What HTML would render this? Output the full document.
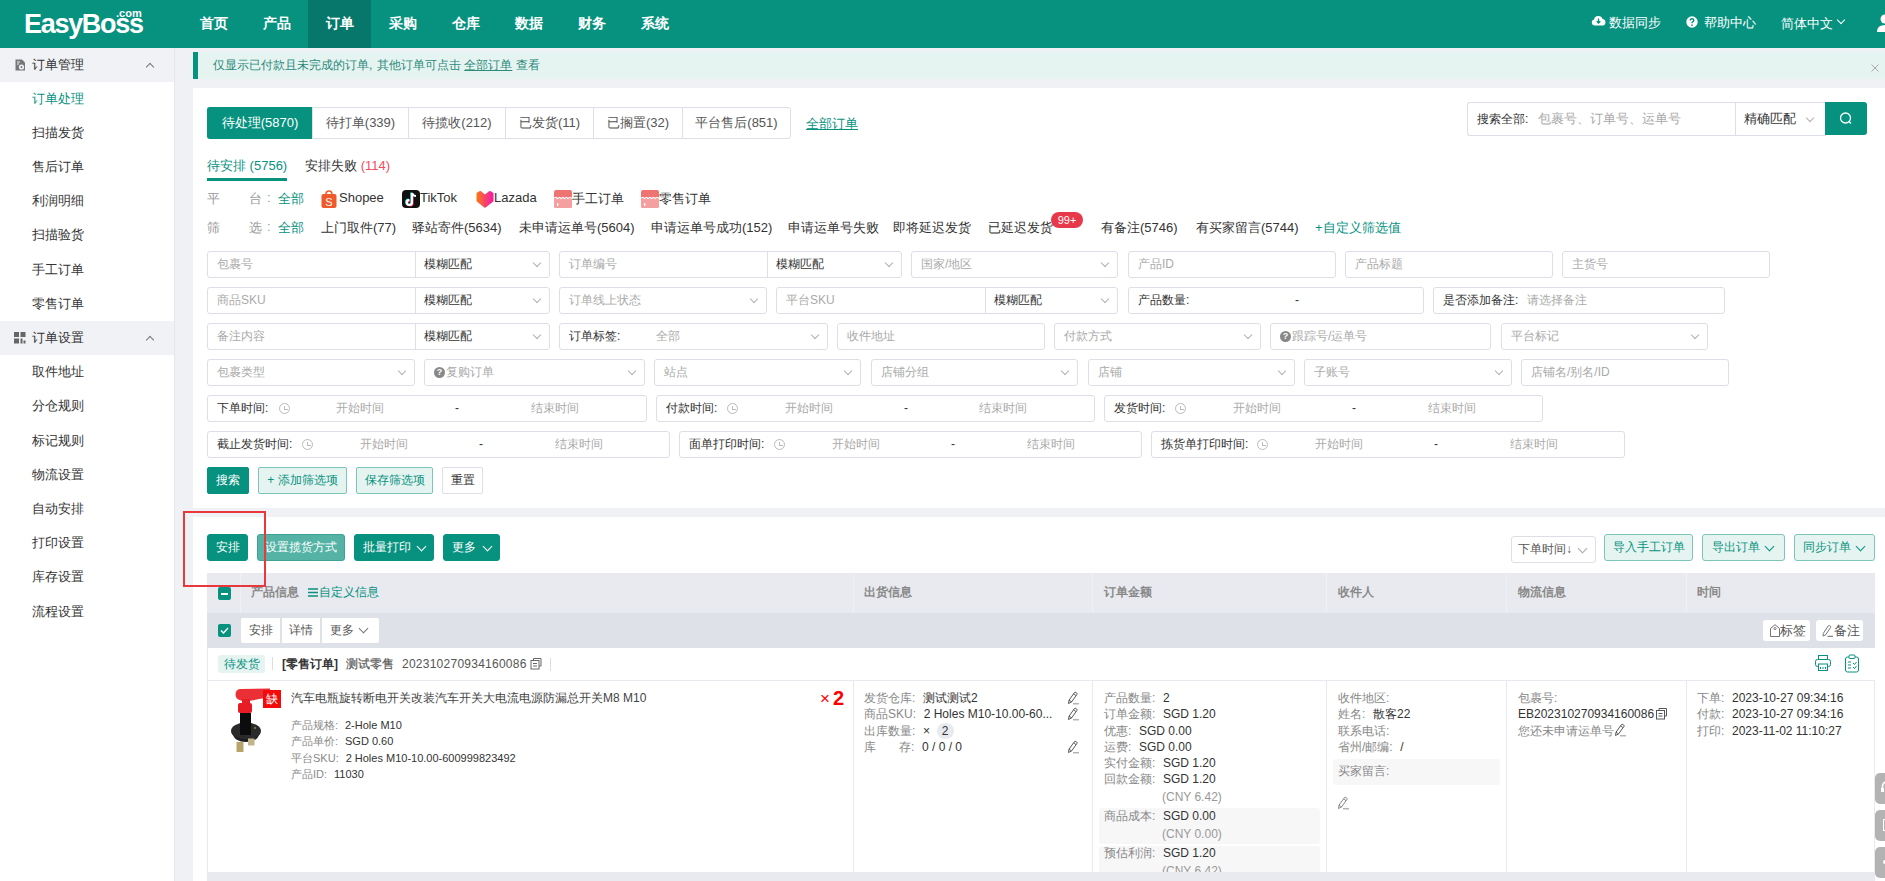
<!DOCTYPE html>
<html><head><meta charset="utf-8">
<style>
*{box-sizing:border-box;margin:0;padding:0}
html,body{width:1885px;height:881px;overflow:hidden}
body{font-family:"Liberation Sans",sans-serif;font-size:13px;color:#333;background:#f0f1f5;position:relative}
.abs{position:absolute}
.hdr{left:0;top:0;width:1885px;height:48px;background:#07927f}
.logo{left:24px;top:7px;color:#fff;font-size:27px;line-height:34px;font-weight:bold;letter-spacing:-1.3px;white-space:nowrap}
.logo small{position:absolute;left:92px;top:-4px;font-size:11px;line-height:20px;font-weight:bold;letter-spacing:0}
.nav{left:182px;top:0;height:48px;display:flex}
.nav div{width:63px;height:48px;line-height:46px;text-align:center;color:#fff;font-size:14px;font-weight:bold}
.nav div.on{background:#06776a}
.side{left:0;top:48px;width:175px;height:833px;background:#fff;border-right:1px solid #e4e6eb}
.side .g{position:absolute;left:0;width:174px;height:34px;background:#f1f2f6;line-height:34px;padding-left:32px;font-size:13px;color:#333}
.side .i{position:absolute;left:32px;font-size:13px;color:#333;line-height:20px;margin-top:1px}
.notice{left:193px;top:52px;width:1692px;height:27px;background:#e6f4f1;border-left:5px solid #07927f;color:#2c8a7b;font-size:12px;line-height:26px;padding-left:15px}
.card{left:193px;background:#fff;width:1692px}
.tabs{left:207px;top:107px;height:32px;display:flex}
.tabs div{height:32px;line-height:30px;text-align:center;color:#555;font-size:13px;border:1px solid #dcdfe6;border-right:0}
.tabs div:last-child{border-right:1px solid #dcdfe6;border-radius:0 3px 3px 0}
.tabs div.on{background:#07927f;color:#fff;border-color:#07927f;border-radius:3px 0 0 3px}
.teal{color:#07927f}
.inp{position:absolute;height:27px;border:1px solid #dcdfe6;border-radius:3px;background:#fff;font-size:12px;color:#aaa;line-height:25px;padding-left:9px;white-space:nowrap}
.chev{position:absolute;width:7px;height:7px;border-right:1px solid #aaa;border-bottom:1px solid #aaa;transform:rotate(45deg)}
.lbl{color:#333}
.btn{position:absolute;height:26px;line-height:24px;border-radius:2px;font-size:12px;text-align:center;white-space:nowrap}
.bp{background:#07927f;color:#fff;border:1px solid #07927f}
.bl{background:#e6f4f1;color:#07927f;border:1px solid #7cc6b9}
.bw{background:#fff;color:#333;border:1px solid #dcdfe6}
.gray{color:#999}
.th{position:absolute;top:0;font-size:12px;color:#888;font-weight:bold;line-height:39px}
.k{color:#888}
.q{display:inline-block;width:11px;height:11px;border-radius:50%;background:#888;color:#fff;font-size:9px;line-height:11px;text-align:center;font-weight:bold;margin-right:1px;vertical-align:1px}
.clk{position:absolute;top:7px;width:11px;height:11px;border:1px solid #bbb;border-radius:50%}
.clk:after{content:"";position:absolute;left:4px;top:2px;width:3px;height:3px;border-left:1px solid #bbb;border-bottom:1px solid #bbb}
.pf{position:absolute;top:190px;font-size:13px;color:#333;white-space:nowrap}
.fl{position:absolute;top:219px;font-size:13px;color:#333;white-space:nowrap}
.dl{font-size:12px;line-height:16.3px;color:#333;white-space:nowrap}
.cl{display:inline-block;width:11px;font-style:normal}
.pd{font-size:11px;line-height:16.4px}
.pd .cl{width:10px}
.pen{vertical-align:-2px}
</style></head><body>

<!-- header -->
<div class="abs hdr">
  <div class="abs logo">EasyBoss<small>.com</small></div>
  <div class="abs nav">
    <div>首页</div><div>产品</div><div class="on">订单</div><div>采购</div><div>仓库</div><div>数据</div><div>财务</div><div>系统</div>
  </div>
  <svg class="abs" style="left:1591px;top:15px" width="15" height="11" viewBox="0 0 15 11"><path d="M3.5 10.5 A3 3 0 0 1 3 4.6 A4.5 4.5 0 0 1 11.6 4 A3.3 3.3 0 0 1 11.8 10.5 Z" fill="#fff"/><path d="M7.5 3.5 V7.8 M5.7 6.2 L7.5 8 L9.3 6.2" fill="none" stroke="#07927f" stroke-width="1.3"/></svg>
  <div class="abs" style="left:1609px;top:14px;color:#fff;font-size:13px">数据同步</div>
  <svg class="abs" style="left:1686px;top:16px" width="12" height="12" viewBox="0 0 12 12"><circle cx="6" cy="6" r="5.7" fill="#fff"/><path d="M4.2 4.6 Q4.2 2.7 6 2.7 Q7.8 2.7 7.8 4.4 Q7.8 5.4 6.6 5.9 Q6 6.2 6 7.2" fill="none" stroke="#07927f" stroke-width="1.4"/><circle cx="6" cy="9.1" r="0.85" fill="#07927f"/></svg>
  <div class="abs" style="left:1704px;top:14px;color:#fff;font-size:13px">帮助中心</div>
  <div class="abs" style="left:1781px;top:15px;color:#fff;font-size:13px">简体中文</div>
  <span class="chev" style="left:1838px;top:17px;width:6px;height:6px;border-color:#fff"></span>
  <svg class="abs" style="left:1877px;top:14px" width="12" height="19" viewBox="0 0 12 19"><circle cx="8" cy="5" r="4.5" fill="#fff"/><path d="M0 18 Q0 11 8 11 Q12 11 12 18 Z" fill="#fff"/></svg>
</div>

<!-- sidebar -->
<div class="abs side">
  <div class="g" style="top:0">订单管理</div>
  <svg class="abs" style="left:15px;top:11px" width="11" height="12" viewBox="0 0 11 12"><path d="M0.5 0.5 H7 L10 3.5 V11.5 H0.5 Z" fill="#777"/><circle cx="6.5" cy="8" r="2.6" fill="#f1f2f6"/><circle cx="6.5" cy="8" r="1" fill="#777"/><path d="M2 3 H5 M2 5 H4" stroke="#f1f2f6" stroke-width="1"/></svg>
  <span class="chev" style="left:147px;top:16px;width:6px;height:6px;transform:rotate(225deg);border-color:#777"></span>
  <div class="i" style="top:40px;color:#07927f">订单处理</div>
  <div class="i" style="top:74px">扫描发货</div>
  <div class="i" style="top:108px">售后订单</div>
  <div class="i" style="top:142px">利润明细</div>
  <div class="i" style="top:176px">扫描验货</div>
  <div class="i" style="top:211px">手工订单</div>
  <div class="i" style="top:245px">零售订单</div>
  <div class="g" style="top:273px">订单设置</div>
  <svg class="abs" style="left:14px;top:284px" width="12" height="12" viewBox="0 0 12 12"><rect x="0" y="0" width="5" height="5" fill="#666"/><rect x="6.5" y="0" width="5" height="5" fill="#666"/><rect x="0" y="6.5" width="5" height="5" fill="#666"/><rect x="6.5" y="6.5" width="2" height="5" fill="#666"/><rect x="9.5" y="8.5" width="2" height="3" fill="#666"/></svg>
  <span class="chev" style="left:147px;top:289px;width:6px;height:6px;transform:rotate(225deg);border-color:#777"></span>
  <div class="i" style="top:313px">取件地址</div>
  <div class="i" style="top:347px">分仓规则</div>
  <div class="i" style="top:382px">标记规则</div>
  <div class="i" style="top:416px">物流设置</div>
  <div class="i" style="top:450px">自动安排</div>
  <div class="i" style="top:484px">打印设置</div>
  <div class="i" style="top:518px">库存设置</div>
  <div class="i" style="top:553px">流程设置</div>
</div>

<!-- notice -->
<div class="abs notice">仅显示已付款且未完成的订单<span style="display:inline-block;width:8px">,</span>其他订单可点击 <u>全部订单</u> 查看<svg class="abs" style="left:1673px;top:12px" width="8" height="8" viewBox="0 0 8 8"><path d="M0.5 0.5 L7.5 7.5 M7.5 0.5 L0.5 7.5" stroke="#aaa" stroke-width="1"/></svg></div>

<!-- card 1 -->
<div class="abs card" style="top:88px;height:420px"></div>
<div class="abs tabs">
  <div class="on" style="width:105px">待处理(5870)</div><div style="width:96px">待打单(339)</div><div style="width:97px">待揽收(212)</div><div style="width:88px">已发货(11)</div><div style="width:89px">已搁置(32)</div><div style="width:109px">平台售后(851)</div>
</div>
<div class="abs teal" style="left:806px;top:115px;font-size:13px;text-decoration:underline">全部订单</div>

<div class="abs" style="left:207px;top:157px;font-size:13px;color:#07927f">待安排 (5756)</div>
<div class="abs" style="left:207px;top:178px;width:80px;height:3px;background:#07927f"></div>
<div class="abs" style="left:305px;top:157px;font-size:13px;color:#333">安排失败 <span style="color:#f04d5d">(114)</span></div>

<div class="pf" style="left:207px;color:#999">平</div><div class="pf" style="left:249px;color:#999">台</div><div class="pf" style="left:267px;color:#999">:</div><div class="pf" style="left:278px;color:#07927f">全部</div>
<div class="fl" style="left:207px;color:#999">筛</div><div class="fl" style="left:249px;color:#999">选</div><div class="fl" style="left:267px;color:#999">:</div><div class="fl" style="left:278px;color:#07927f">全部</div>


<!-- platform -->
<div class="abs" style="left:321px;top:190px;width:16px;height:18px">
 <svg width="16" height="18" viewBox="0 0 16 18"><path d="M5 4.5 Q5 1 8 1 Q11 1 11 4.5" fill="none" stroke="#f05a2a" stroke-width="1.6"/><rect x="0.5" y="4" width="15" height="14" rx="2" fill="#f05a2a"/><text x="8" y="15.5" font-size="11" fill="#fff" text-anchor="middle" font-family="Liberation Sans">S</text></svg></div>
<div class="pf" style="left:339px">Shopee</div>
<div class="abs" style="left:402px;top:190px;width:18px;height:18px;background:#111;border-radius:4px">
 <svg width="18" height="18" viewBox="0 0 18 18"><path d="M10 3 V12.5 A2.6 2.6 0 1 1 7.4 9.9" fill="none" stroke="#25f4ee" stroke-width="2" transform="translate(-0.7,-0.5)"/><path d="M10 3 V12.5 A2.6 2.6 0 1 1 7.4 9.9" fill="none" stroke="#fe2c55" stroke-width="2" transform="translate(0.7,0.5)"/><path d="M10 3 V12.5 A2.6 2.6 0 1 1 7.4 9.9 M10 3 Q11 6 14 6" fill="none" stroke="#fff" stroke-width="2"/></svg></div>
<div class="pf" style="left:420px">TikTok</div>
<div class="abs" style="left:476px;top:190px;width:18px;height:18px">
 <svg width="18" height="18" viewBox="0 0 18 18"><defs><linearGradient id="lz" x1="0" x2="1" y1="0" y2="0"><stop offset="0" stop-color="#fb7a0c"/><stop offset="0.5" stop-color="#f5476a"/><stop offset="1" stop-color="#f716a8"/></linearGradient></defs><path d="M9 4.5 L5 1.2 Q4.2 0.8 3.4 1.2 L1.2 2.6 Q0.5 3.1 0.5 4 V10.5 Q0.5 11.2 1.1 11.7 L8 17.3 Q9 18 10 17.3 L16.9 11.7 Q17.5 11.2 17.5 10.5 V4 Q17.5 3.1 16.8 2.6 L14.6 1.2 Q13.8 0.8 13 1.2 Z" fill="url(#lz)"/><path d="M9 4.5 V17.6" stroke="#e83a60" stroke-width="0.6" opacity="0.6"/></svg></div>
<div class="pf" style="left:494px">Lazada</div>
<div class="abs" style="left:554px;top:190px;width:18px;height:18px;background:#ee7474;border-radius:2px;overflow:hidden">
 <svg width="18" height="18" viewBox="0 0 18 18"><rect x="0" y="9" width="18" height="9" fill="#f4a0a0"/><path d="M0 8 L2 7.5 L3.5 8.5 L5.5 7.5 L7 8.5 L9 7.5 L10.5 8.5 L12.5 7.5 L14 8.5 L16 7.5 L18 8.5" fill="none" stroke="#fff" stroke-width="1.2"/><rect x="3" y="13" width="1.3" height="3" fill="#fff"/></svg></div>
<div class="pf" style="left:572px">手工订单</div>
<div class="abs" style="left:641px;top:190px;width:18px;height:18px;background:#ee7474;border-radius:2px;overflow:hidden">
 <svg width="18" height="18" viewBox="0 0 18 18"><rect x="0" y="9" width="18" height="9" fill="#f4a0a0"/><path d="M0 8 L2 7.5 L3.5 8.5 L5.5 7.5 L7 8.5 L9 7.5 L10.5 8.5 L12.5 7.5 L14 8.5 L16 7.5 L18 8.5" fill="none" stroke="#fff" stroke-width="1.2"/><rect x="3" y="13" width="1.3" height="3" fill="#fff"/></svg></div>
<div class="pf" style="left:659px">零售订单</div>

<!-- filters -->
<div class="fl" style="left:321px">上门取件(77)</div>
<div class="fl" style="left:412px">驿站寄件(5634)</div>
<div class="fl" style="left:519px">未申请运单号(5604)</div>
<div class="fl" style="left:651px">申请运单号成功(152)</div>
<div class="fl" style="left:788px">申请运单号失败</div>
<div class="fl" style="left:893px">即将延迟发货</div>
<div class="fl" style="left:988px">已延迟发货</div>
<div class="abs" style="left:1051px;top:212px;width:32px;height:16px;border-radius:8px;background:#e8394a;color:#fff;font-size:11px;line-height:16px;text-align:center">99+</div>
<div class="fl" style="left:1101px">有备注(5746)</div>
<div class="fl" style="left:1196px">有买家留言(5744)</div>
<div class="fl" style="left:1315px;color:#07927f">+自定义筛选值</div>

<!-- search -->
<div class="abs" style="left:1467px;top:102px;width:269px;height:34px;border:1px solid #dcdfe6;border-right:0;border-radius:3px 0 0 3px;background:#fff;font-size:13px;line-height:32px;padding-left:9px;white-space:nowrap"><span style="color:#333;font-size:12px">搜索全部:</span><span style="color:#aaa;margin-left:10px">包裹号、订单号、运单号</span></div>
<div class="abs" style="left:1735px;top:102px;width:91px;height:34px;border:1px solid #dcdfe6;background:#fff;font-size:13px;line-height:32px;padding-left:8px;color:#333">精确匹配<span class="chev" style="left:71px;top:12px;width:6px;height:6px;border-color:#b0b0b0"></span></div>
<div class="abs" style="left:1825px;top:102px;width:42px;height:33px;background:#07927f;border-radius:0 3px 3px 0">
 <svg width="42" height="33" viewBox="0 0 42 33"><circle cx="20.5" cy="16" r="5" fill="none" stroke="#fff" stroke-width="1.3"/><path d="M24 19.5 L26 21.5" stroke="#fff" stroke-width="1.3"/></svg></div>

<!-- forms -->
<div class="inp" style="left:207px;top:251px;width:343px">包裹号<div class="abs" style="left:207px;top:0;width:1px;height:25px;background:#dcdfe6"></div><span class="abs lbl" style="left:216px;top:0">模糊匹配</span><span class="chev" style="left:326px;top:8px;width:6px;height:6px;border-color:#b0b0b0"></span></div>
<div class="inp" style="left:559px;top:251px;width:343px">订单编号<div class="abs" style="left:207px;top:0;width:1px;height:25px;background:#dcdfe6"></div><span class="abs lbl" style="left:216px;top:0">模糊匹配</span><span class="chev" style="left:326px;top:8px;width:6px;height:6px;border-color:#b0b0b0"></span></div>
<div class="inp" style="left:911px;top:251px;width:207px">国家/地区<span class="chev" style="left:190px;top:8px;width:6px;height:6px;border-color:#b0b0b0"></span></div>
<div class="inp" style="left:1128px;top:251px;width:208px">产品ID</div>
<div class="inp" style="left:1345px;top:251px;width:208px">产品标题</div>
<div class="inp" style="left:1562px;top:251px;width:208px">主货号</div>
<div class="inp" style="left:207px;top:287px;width:343px">商品SKU<div class="abs" style="left:207px;top:0;width:1px;height:25px;background:#dcdfe6"></div><span class="abs lbl" style="left:216px;top:0">模糊匹配</span><span class="chev" style="left:326px;top:8px;width:6px;height:6px;border-color:#b0b0b0"></span></div>
<div class="inp" style="left:559px;top:287px;width:208px">订单线上状态<span class="chev" style="left:191px;top:8px;width:6px;height:6px;border-color:#b0b0b0"></span></div>
<div class="inp" style="left:776px;top:287px;width:342px">平台SKU<div class="abs" style="left:208px;top:0;width:1px;height:25px;background:#dcdfe6"></div><span class="abs lbl" style="left:217px;top:0">模糊匹配</span><span class="chev" style="left:325px;top:8px;width:6px;height:6px;border-color:#b0b0b0"></span></div>
<div class="inp" style="left:1128px;top:287px;width:296px"><span class="lbl">产品数量:</span><span class="abs lbl" style="left:166px;top:0">-</span></div>
<div class="inp" style="left:1433px;top:287px;width:292px"><span class="lbl">是否添加备注:</span><span class="abs" style="left:93px;top:0">请选择备注</span></div>
<div class="inp" style="left:207px;top:323px;width:343px">备注内容<div class="abs" style="left:207px;top:0;width:1px;height:25px;background:#dcdfe6"></div><span class="abs lbl" style="left:216px;top:0">模糊匹配</span><span class="chev" style="left:326px;top:8px;width:6px;height:6px;border-color:#b0b0b0"></span></div>
<div class="inp" style="left:559px;top:323px;width:269px"><span class="lbl">订单标签:</span><span class="chev" style="left:252px;top:8px;width:6px;height:6px;border-color:#b0b0b0"></span><span class="abs" style="left:96px;top:0">全部</span></div>
<div class="inp" style="left:837px;top:323px;width:208px">收件地址</div>
<div class="inp" style="left:1054px;top:323px;width:207px">付款方式<span class="chev" style="left:190px;top:8px;width:6px;height:6px;border-color:#b0b0b0"></span></div>
<div class="inp" style="left:1270px;top:323px;width:221px"><span class="q">?</span>跟踪号/运单号</div>
<div class="inp" style="left:1501px;top:323px;width:207px">平台标记<span class="chev" style="left:190px;top:8px;width:6px;height:6px;border-color:#b0b0b0"></span></div>
<div class="inp" style="left:207px;top:359px;width:208px">包裹类型<span class="chev" style="left:191px;top:8px;width:6px;height:6px;border-color:#b0b0b0"></span></div>
<div class="inp" style="left:424px;top:359px;width:221px"><span class="q">?</span>复购订单<span class="chev" style="left:204px;top:8px;width:6px;height:6px;border-color:#b0b0b0"></span></div>
<div class="inp" style="left:654px;top:359px;width:207px">站点<span class="chev" style="left:190px;top:8px;width:6px;height:6px;border-color:#b0b0b0"></span></div>
<div class="inp" style="left:871px;top:359px;width:207px">店铺分组<span class="chev" style="left:190px;top:8px;width:6px;height:6px;border-color:#b0b0b0"></span></div>
<div class="inp" style="left:1088px;top:359px;width:207px">店铺<span class="chev" style="left:190px;top:8px;width:6px;height:6px;border-color:#b0b0b0"></span></div>
<div class="inp" style="left:1304px;top:359px;width:208px">子账号<span class="chev" style="left:191px;top:8px;width:6px;height:6px;border-color:#b0b0b0"></span></div>
<div class="inp" style="left:1521px;top:359px;width:208px">店铺名/别名/ID</div>
<div class="inp" style="left:207px;top:395px;width:440px"><span class="lbl">下单时间:</span><span class="clk" style="left:71px"></span><span class="abs" style="left:128px;top:0">开始时间</span><span class="abs lbl" style="left:247px;top:0">-</span><span class="abs" style="left:323px;top:0">结束时间</span></div>
<div class="inp" style="left:656px;top:395px;width:439px"><span class="lbl">付款时间:</span><span class="clk" style="left:70px"></span><span class="abs" style="left:128px;top:0">开始时间</span><span class="abs lbl" style="left:247px;top:0">-</span><span class="abs" style="left:322px;top:0">结束时间</span></div>
<div class="inp" style="left:1104px;top:395px;width:439px"><span class="lbl">发货时间:</span><span class="clk" style="left:70px"></span><span class="abs" style="left:128px;top:0">开始时间</span><span class="abs lbl" style="left:247px;top:0">-</span><span class="abs" style="left:323px;top:0">结束时间</span></div>
<div class="inp" style="left:207px;top:431px;width:463px"><span class="lbl">截止发货时间:</span><span class="clk" style="left:94px"></span><span class="abs" style="left:152px;top:0">开始时间</span><span class="abs lbl" style="left:271px;top:0">-</span><span class="abs" style="left:347px;top:0">结束时间</span></div>
<div class="inp" style="left:679px;top:431px;width:463px"><span class="lbl">面单打印时间:</span><span class="clk" style="left:94px"></span><span class="abs" style="left:152px;top:0">开始时间</span><span class="abs lbl" style="left:271px;top:0">-</span><span class="abs" style="left:347px;top:0">结束时间</span></div>
<div class="inp" style="left:1151px;top:431px;width:474px"><span class="lbl">拣货单打印时间:</span><span class="clk" style="left:105px"></span><span class="abs" style="left:163px;top:0">开始时间</span><span class="abs lbl" style="left:282px;top:0">-</span><span class="abs" style="left:358px;top:0">结束时间</span></div>
<div class="btn bp" style="left:207px;top:467px;width:42px;height:27px;line-height:25px">搜索</div>
<div class="btn bl" style="left:258px;top:467px;width:89px;height:27px;line-height:25px">+ 添加筛选项</div>
<div class="btn bl" style="left:356px;top:467px;width:77px;height:27px;line-height:25px">保存筛选项</div>
<div class="btn bw" style="left:442px;top:467px;width:41px;height:27px;line-height:25px">重置</div>

<!-- card 2 -->
<div class="abs card" style="top:517px;height:364px"></div>


<div class="abs" style="left:183px;top:511px;width:83px;height:76px;border:2px solid #e8383d;z-index:5"></div>
<div class="btn bp" style="left:207px;top:534px;width:41px;height:27px;line-height:25px;border-radius:3px">安排</div>
<div class="btn" style="left:257px;top:534px;width:88px;height:27px;line-height:25px;border-radius:3px;background:#54b3a5;border:1px solid #3ea393;color:#fff">设置揽货方式</div>
<div class="btn bp" style="left:354px;top:534px;width:80px;height:27px;line-height:25px;border-radius:3px;text-align:left;padding-left:8px">批量打印<span class="chev" style="left:63px;top:8px;border-color:#fff"></span></div>
<div class="btn bp" style="left:443px;top:534px;width:57px;height:27px;line-height:25px;border-radius:3px;text-align:left;padding-left:8px">更多<span class="chev" style="left:40px;top:8px;border-color:#fff"></span></div>

<div class="btn bw" style="left:1511px;top:536px;width:85px;height:27px;line-height:25px;text-align:left;padding-left:6px;color:#555;border-radius:3px">下单时间↓<span class="chev" style="left:67px;top:8px"></span></div>
<div class="btn bl" style="left:1604px;top:534px;width:89px;height:27px;line-height:25px;border-radius:3px">导入手工订单</div>
<div class="btn bl" style="left:1702px;top:534px;width:83px;height:27px;line-height:25px;border-radius:3px;text-align:left;padding-left:9px">导出订单<span class="chev" style="left:63px;top:8px;border-color:#07927f"></span></div>
<div class="btn bl" style="left:1794px;top:534px;width:81px;height:27px;line-height:25px;border-radius:3px;text-align:left;padding-left:8px">同步订单<span class="chev" style="left:62px;top:8px;border-color:#07927f"></span></div>

<!-- table header -->
<div class="abs" style="left:207px;top:573px;width:1668px;height:40px;background:#e8eaef">
  <div class="abs" style="left:33px;top:0;width:1px;height:40px;background:#f0f1f4"></div>
  <div class="abs" style="left:646px;top:0;width:1px;height:40px;background:#f0f1f4"></div>
  <div class="abs" style="left:885px;top:0;width:1px;height:40px;background:#f0f1f4"></div>
  <div class="abs" style="left:1119px;top:0;width:1px;height:40px;background:#f0f1f4"></div>
  <div class="abs" style="left:1299px;top:0;width:1px;height:40px;background:#f0f1f4"></div>
  <div class="abs" style="left:1479px;top:0;width:1px;height:40px;background:#f0f1f4"></div>
  <div class="abs" style="left:11px;top:14px;width:13px;height:13px;background:#07927f;border-radius:2px"><div class="abs" style="left:3px;top:6px;width:7px;height:1.5px;background:#fff"></div></div>
  <div class="th" style="left:44px">产品信息</div>
  <div class="abs teal" style="left:101px;top:0;line-height:39px;font-size:12px;white-space:nowrap"><svg width="10" height="9" viewBox="0 0 10 9" style="margin-right:1px;vertical-align:-1px"><path d="M0 1 H10 M0 4.5 H10 M0 8 H10" stroke="#07927f" stroke-width="1.6"/></svg>自定义信息</div>
  <div class="th" style="left:657px">出货信息</div>
  <div class="th" style="left:897px">订单金额</div>
  <div class="th" style="left:1131px">收件人</div>
  <div class="th" style="left:1311px">物流信息</div>
  <div class="th" style="left:1490px">时间</div>
</div>
<!-- group row -->
<div class="abs" style="left:207px;top:613px;width:1668px;height:35px;background:#dee1e7">
  <div class="abs" style="left:11px;top:11px;width:13px;height:13px;background:#07927f;border-radius:2px"><svg class="abs" style="left:0;top:0" width="13" height="13"><path d="M3 6.5 L5.5 9 L10 4" fill="none" stroke="#fff" stroke-width="1.4"/></svg></div>
  <div class="abs" style="left:34px;top:5px;height:25px;display:flex;gap:2px;font-size:12px;line-height:25px;color:#555">
    <div style="background:#fff;width:39px;text-align:center;border-radius:2px 0 0 2px">安排</div>
    <div style="background:#fff;width:38px;text-align:center">详情</div>
    <div style="background:#fff;width:57px;text-align:left;padding-left:8px;position:relative;border-radius:0 2px 2px 0">更多<span class="chev" style="left:38px;top:7px;border-color:#777"></span></div>
  </div>
  <div class="abs" style="left:1556px;top:7px;width:47px;height:21px;background:#fff;border-radius:3px"><svg class="abs" style="left:7px;top:4px" width="10" height="13" viewBox="0 0 10 13"><path d="M0.5 12.5 V4.5 L5 0.7 L9.5 4.5 V12.5 Z" fill="none" stroke="#666" stroke-width="0.9" stroke-linejoin="round"/><circle cx="5" cy="4.6" r="1.1" fill="none" stroke="#666" stroke-width="0.8"/></svg><div class="abs" style="left:17px;top:0;font-size:13px;line-height:21px;color:#555">标签</div></div>
  <div class="abs" style="left:1609px;top:7px;width:47px;height:21px;background:#fff;border-radius:3px"><svg class="abs" style="left:6px;top:4px" width="12" height="13" viewBox="0 0 12 13"><path d="M1 12 L1.3 9.4 L6.2 2 Q6.8 1.2 7.7 1.7 L8.3 2.1 Q9.1 2.7 8.6 3.5 L3.6 10.9 Z" fill="none" stroke="#666" stroke-width="0.9" stroke-linejoin="round"/><path d="M5.5 12.3 H11" stroke="#666" stroke-width="1"/></svg><div class="abs" style="left:18px;top:0;font-size:13px;line-height:21px;color:#555">备注</div></div>
</div>
<!-- order header row -->
<div class="abs" style="left:207px;top:648px;width:1668px;height:33px;background:#fff;border-left:1px solid #e8eaef;border-bottom:1px solid #e8eaef">
  <div class="abs" style="left:10px;top:7px;width:47px;height:18px;background:#e6f4f1;border-radius:3px;color:#07927f;font-size:12px;line-height:18px;text-align:center">待发货</div>
  <div class="abs" style="left:64px;top:9px;width:1px;height:13px;background:#ddd"></div>
  <div class="abs" style="left:74px;top:7px;font-size:12px;line-height:18px;white-space:nowrap;color:#333"><b>[零售订单]</b></div>
  <div class="abs" style="left:138px;top:7px;font-size:12px;line-height:18px;white-space:nowrap;color:#555;-webkit-text-stroke:0.2px #555">测试零售</div>
  <div class="abs" style="left:194px;top:7px;font-size:12px;line-height:18px;white-space:nowrap;color:#555;letter-spacing:0.25px">202310270934160086</div>
  <svg class="abs" style="left:322px;top:9px" width="12" height="13" viewBox="0 0 12 13"><path d="M3.5 3 V1.5 H11 V9 H9" fill="none" stroke="#666" stroke-width="1"/><rect x="1" y="3.5" width="8" height="8.5" fill="#fff" stroke="#666" stroke-width="1"/><path d="M3 6.5 H7 M3 9 H7" stroke="#666"/></svg>
  <div class="abs" style="left:342px;top:10px;width:1px;height:13px;background:#ddd"></div>
  <svg class="abs" style="left:1606px;top:6px" width="18" height="18" viewBox="0 0 18 18"><rect x="4.5" y="1.5" width="9" height="4" fill="none" stroke="#07927f" stroke-width="1"/><rect x="1.5" y="5.5" width="15" height="7" rx="2" fill="none" stroke="#07927f" stroke-width="1"/><rect x="4.5" y="10" width="9" height="6.5" fill="#fff" stroke="#07927f" stroke-width="1"/><path d="M6.5 13 V15 M9 13 V15 M11.5 13 V15" stroke="#07927f"/></svg>
  <svg class="abs" style="left:1636px;top:6px" width="16" height="19" viewBox="0 0 16 19"><rect x="1.5" y="3" width="13" height="15" rx="2" fill="none" stroke="#07927f" stroke-width="1"/><rect x="5" y="1" width="6" height="3.5" rx="1" fill="#fff" stroke="#07927f" stroke-width="1"/><path d="M4 8 H7 M4 11 H7 M4 14 H7 M9 9 L10.5 10.5 L12.5 8 M9 13 L10.5 14.5 L12.5 12" fill="none" stroke="#07927f" stroke-width="1"/></svg>
</div>
<!-- product row -->
<div class="abs" style="left:207px;top:681px;width:1668px;height:191px;background:#fff;border-left:1px solid #e8eaef;border-right:1px solid #e8eaef">
  <div class="abs" style="left:645px;top:0;width:1px;height:191px;background:#e8eaef"></div>
  <div class="abs" style="left:884px;top:0;width:1px;height:191px;background:#e8eaef"></div>
  <div class="abs" style="left:1118px;top:0;width:1px;height:191px;background:#e8eaef"></div>
  <div class="abs" style="left:1298px;top:0;width:1px;height:191px;background:#e8eaef"></div>
  <div class="abs" style="left:1478px;top:0;width:1px;height:191px;background:#e8eaef"></div>
</div>
<svg class="abs" style="left:228px;top:686px" width="56" height="68" viewBox="0 0 56 68">
  <path d="M12 3 L42 2.5 L42 11 L21 15 Q8 16 7.5 9 Q7.5 3.5 12 3 Z" fill="#ea2f36"/>
  <rect x="14" y="13" width="8" height="6" fill="#e41f28"/>
  <rect x="10" y="17" width="14" height="10" rx="2" fill="#e81c25"/>
  <ellipse cx="18" cy="48" rx="13" ry="8" fill="#1e1e1e"/>
  <ellipse cx="18" cy="45" rx="15" ry="8.5" fill="#2a2a2a"/>
  <rect x="12" y="27" width="11" height="22" fill="#0c0c0c"/>
  <rect x="8.5" y="56" width="7" height="10" fill="#b8a46a"/><rect x="20" y="52.5" width="6.5" height="7" fill="#c2b48a"/>
  <circle cx="27" cy="42" r="1" fill="#a08040"/>
</svg>
<div class="abs" style="left:263px;top:690px;width:18px;height:18px;background:#f40a0a;color:#fff;font-size:12px;line-height:18px;text-align:center">缺</div>
<div class="abs" style="left:291px;top:689px;font-size:12px;line-height:19px;color:#444;white-space:nowrap">汽车电瓶旋转断电开关改装汽车开关大电流电源防漏总开关M8 M10</div>
<div class="abs dl pd" style="left:291px;top:717px">
  <div><span class="k">产品规格<i class="cl">:</i></span>2-Hole M10</div>
  <div><span class="k">产品单价<i class="cl">:</i></span>SGD 0.60</div>
  <div><span class="k">平台SKU<i class="cl">:</i></span>2 Holes M10-10.00-600999823492</div>
  <div><span class="k">产品ID<i class="cl">:</i></span>11030</div>
</div>
<div class="abs" style="left:820px;top:686px;color:#f00;white-space:nowrap;line-height:24px"><span style="font-size:17px;margin-right:3px">×</span><b style="font-size:20px;vertical-align:-1px">2</b></div>

<div class="abs dl" style="left:864px;top:690px;width:220px">
  <div><span class="k">发货仓库<i class="cl">:</i></span>测试测试2</div>
  <div><span class="k">商品SKU<i class="cl">:</i></span>2 Holes M10-10.00-60...</div>
  <div><span class="k">出库数量<i class="cl">:</i></span>×&nbsp;&nbsp;<span style="display:inline-block;width:17px;height:16px;border-radius:8px;background:#e8eaef;text-align:center;line-height:16px">2</span></div>
  <div><span class="k">库<span style="display:inline-block;width:23px"></span>存<i class="cl">:</i></span>0 / 0 / 0</div>
</div>
<div class="abs" style="left:1067px;top:691px"><svg class="pen" width="13" height="14" viewBox="0 0 13 14"><path d="M1.5 12.5 L2 9.2 L7.3 1.8 Q8 0.9 9 1.5 L9.6 1.9 Q10.5 2.6 9.9 3.5 L4.6 10.9 Z" fill="none" stroke="#444" stroke-width="0.9" stroke-linejoin="round"/><path d="M6.6 2.9 L9 4.6 M2 9.2 L4.6 10.9" stroke="#444" stroke-width="0.8"/><path d="M6 12.8 H12" stroke="#999" stroke-width="1.1"/></svg></div>
<div class="abs" style="left:1067px;top:707px"><svg class="pen" width="13" height="14" viewBox="0 0 13 14"><path d="M1.5 12.5 L2 9.2 L7.3 1.8 Q8 0.9 9 1.5 L9.6 1.9 Q10.5 2.6 9.9 3.5 L4.6 10.9 Z" fill="none" stroke="#444" stroke-width="0.9" stroke-linejoin="round"/><path d="M6.6 2.9 L9 4.6 M2 9.2 L4.6 10.9" stroke="#444" stroke-width="0.8"/><path d="M6 12.8 H12" stroke="#999" stroke-width="1.1"/></svg></div>
<div class="abs" style="left:1067px;top:740px"><svg class="pen" width="13" height="14" viewBox="0 0 13 14"><path d="M1.5 12.5 L2 9.2 L7.3 1.8 Q8 0.9 9 1.5 L9.6 1.9 Q10.5 2.6 9.9 3.5 L4.6 10.9 Z" fill="none" stroke="#444" stroke-width="0.9" stroke-linejoin="round"/><path d="M6.6 2.9 L9 4.6 M2 9.2 L4.6 10.9" stroke="#444" stroke-width="0.8"/><path d="M6 12.8 H12" stroke="#999" stroke-width="1.1"/></svg></div>

<div class="abs" style="left:1099px;top:808px;width:221px;height:36px;background:#f7f7f8;border-radius:3px"></div>
<div class="abs" style="left:1099px;top:846px;width:221px;height:30px;background:#f7f7f8;border-radius:3px"></div>
<div class="abs dl" style="left:1104px;top:690px">
  <div><span class="k">产品数量<i class="cl">:</i></span>2</div>
  <div><span class="k">订单金额<i class="cl">:</i></span>SGD 1.20</div>
  <div><span class="k">优惠<i class="cl">:</i></span>SGD 0.00</div>
  <div><span class="k">运费<i class="cl">:</i></span>SGD 0.00</div>
  <div><span class="k">实付金额<i class="cl">:</i></span>SGD 1.20</div>
  <div><span class="k">回款金额<i class="cl">:</i></span>SGD 1.20</div>
</div>
<div class="abs dl" style="left:1162px;top:789px;color:#999">(CNY 6.42)</div>
<div class="abs dl" style="left:1104px;top:808px"><span class="k">商品成本<i class="cl">:</i></span>SGD 0.00</div>
<div class="abs dl" style="left:1162px;top:826px;color:#999">(CNY 0.00)</div>
<div class="abs dl" style="left:1104px;top:845px"><span class="k">预估利润<i class="cl">:</i></span>SGD 1.20</div>
<div class="abs dl" style="left:1162px;top:863px;color:#999">(CNY 6.42)</div>

<div class="abs dl" style="left:1338px;top:690px">
  <div><span class="k">收件地区<i class="cl">:</i></span></div>
  <div><span class="k">姓名<i class="cl">:</i></span>散客22</div>
  <div><span class="k">联系电话<i class="cl">:</i></span></div>
  <div><span class="k">省州/邮编<i class="cl">:</i></span>/</div>
</div>
<div class="abs" style="left:1333px;top:759px;width:167px;height:26px;background:#f7f7f8;border-radius:3px"></div>
<div class="abs dl" style="left:1338px;top:763px"><span class="k">买家留言<i class="cl">:</i></span></div>
<div class="abs" style="left:1337px;top:796px"><svg class="pen" width="13" height="14" viewBox="0 0 13 14"><path d="M1.5 12.5 L2 9.2 L7.3 1.8 Q8 0.9 9 1.5 L9.6 1.9 Q10.5 2.6 9.9 3.5 L4.6 10.9 Z" fill="none" stroke="#777" stroke-width="0.9" stroke-linejoin="round"/><path d="M6.6 2.9 L9 4.6 M2 9.2 L4.6 10.9" stroke="#777" stroke-width="0.8"/><path d="M6 12.8 H12" stroke="#999" stroke-width="1.1"/></svg></div>

<div class="abs dl" style="left:1518px;top:690px">
  <div><span class="k">包裹号<i class="cl">:</i></span></div>
  <div>EB202310270934160086<svg width="13" height="13" viewBox="0 0 12 13" style="vertical-align:-2px;margin-left:1px"><path d="M3.5 3 V1.5 H11 V9 H9" fill="none" stroke="#555" stroke-width="1"/><rect x="1" y="3.5" width="8" height="8.5" fill="#fff" stroke="#555" stroke-width="1"/><path d="M3 6.5 H7 M3 9 H7" stroke="#555"/></svg></div>
  <div><span class="k">您还未申请运单号</span><svg class="pen" width="13" height="14" viewBox="0 0 13 14"><path d="M1.5 12.5 L2 9.2 L7.3 1.8 Q8 0.9 9 1.5 L9.6 1.9 Q10.5 2.6 9.9 3.5 L4.6 10.9 Z" fill="none" stroke="#444" stroke-width="0.9" stroke-linejoin="round"/><path d="M6.6 2.9 L9 4.6 M2 9.2 L4.6 10.9" stroke="#444" stroke-width="0.8"/><path d="M6 12.8 H12" stroke="#999" stroke-width="1.1"/></svg></div>
</div>

<div class="abs dl" style="left:1697px;top:690px">
  <div><span class="k">下单<i class="cl">:</i></span>2023-10-27 09:34:16</div>
  <div><span class="k">付款<i class="cl">:</i></span>2023-10-27 09:34:16</div>
  <div><span class="k">打印<i class="cl">:</i></span>2023-11-02 11:10:27</div>
</div>

<div class="abs" style="left:207px;top:872px;width:1668px;height:9px;background:#e8eaef"></div>
<div class="abs" style="left:1875px;top:773px;width:12px;height:31px;background:#b3b3b3;border-radius:5px 0 0 5px"><svg class="abs" style="left:6px;top:7px" width="6" height="14"><path d="M6 1.5 A5 5 0 0 0 1.5 6.5 V10" fill="none" stroke="#fff" stroke-width="1.6"/><rect x="0" y="8" width="3" height="4" fill="#fff"/></svg></div>
<div class="abs" style="left:1875px;top:810px;width:12px;height:31px;background:#b3b3b3;border-radius:5px 0 0 5px"><div class="abs" style="left:8px;top:9px;width:4px;height:12px;border:1.5px solid #fff;border-right:0"></div></div>
<div class="abs" style="left:1875px;top:847px;width:12px;height:31px;background:#b3b3b3;border-radius:5px 0 0 5px"><div class="abs" style="left:8px;top:13px;width:4px;height:4px;background:#fff;border-radius:2px 0 0 2px"></div></div>

</body></html>
